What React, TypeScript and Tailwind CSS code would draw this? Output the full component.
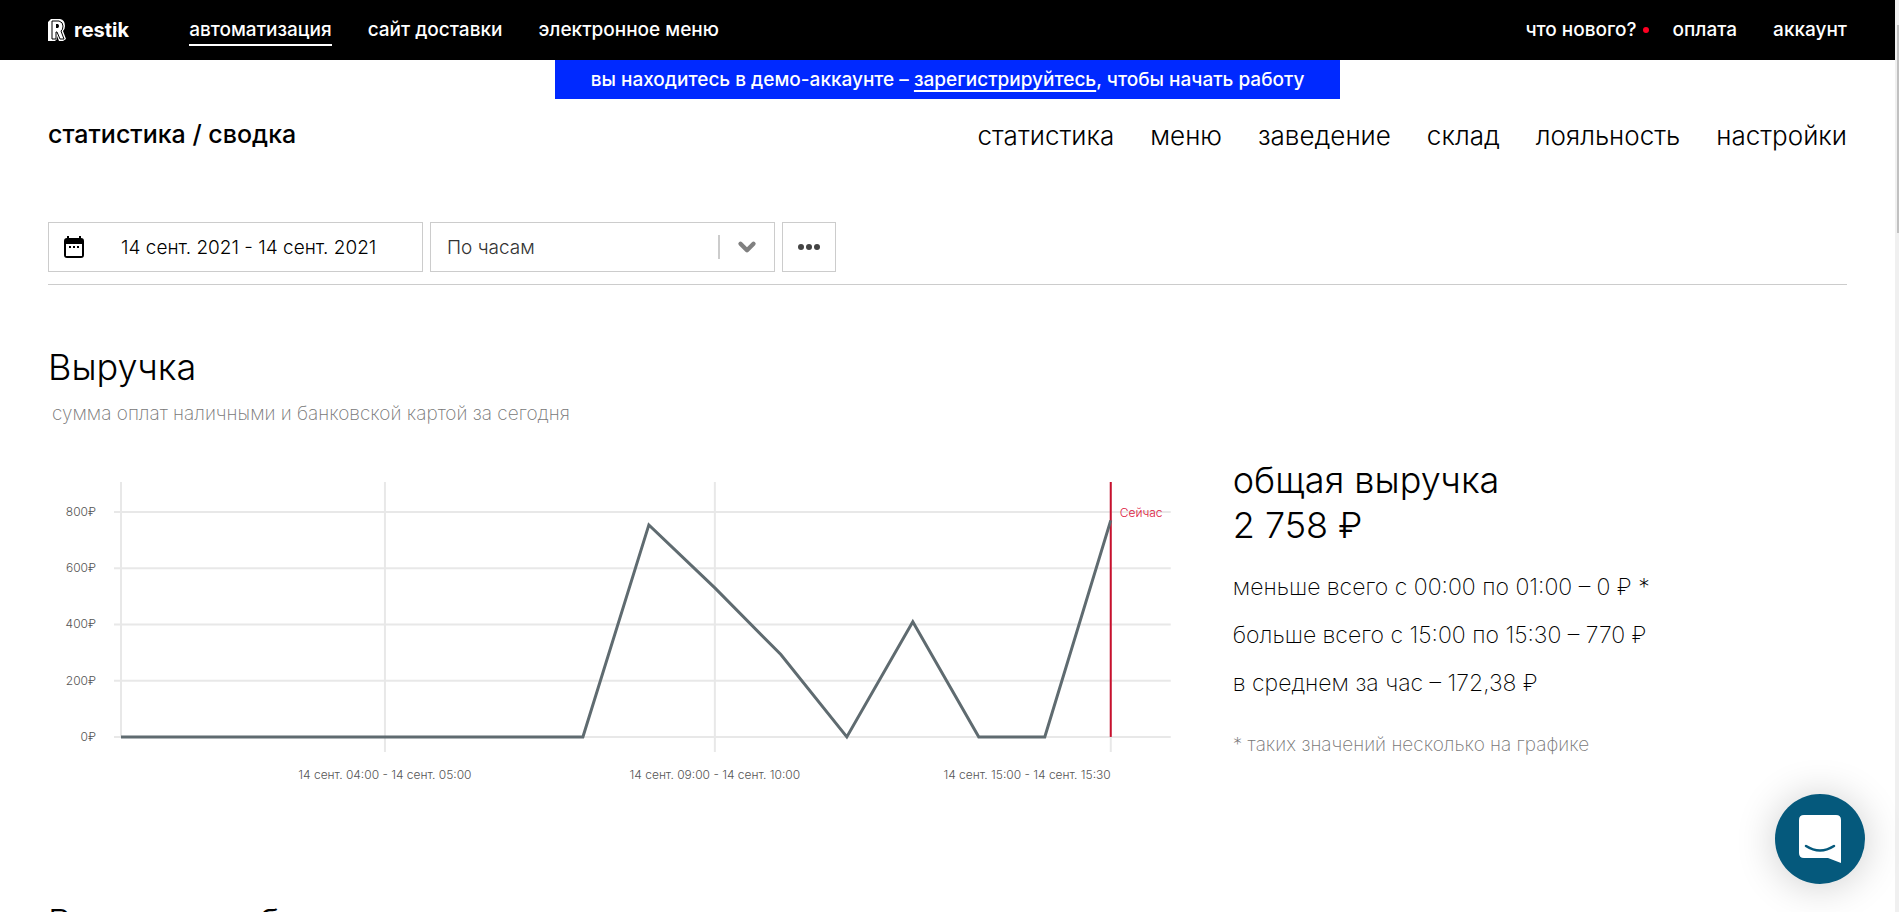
import React from 'react';
import { ChevronDown } from 'lucide-react';

const productLinks = [
  { name: 'автоматизация', href: '#automation', active: true },
  { name: 'сайт доставки', href: '#delivery', active: false },
  { name: 'электронное меню', href: '#emenu', active: false },
];

const sectionLinks = [
  { name: 'статистика', href: '#statistics' },
  { name: 'меню', href: '#menu' },
  { name: 'заведение', href: '#place' },
  { name: 'склад', href: '#stock' },
  { name: 'лояльность', href: '#loyalty' },
  { name: 'настройки', href: '#settings' },
];

const revenue = [0, 0, 0, 0, 0, 0, 0, 0, 754, 530, 293, 0, 410, 0, 0, 770];

const xLabels = [
  { index: 4, text: '14 сент. 04:00 - 14 сент. 05:00', anchor: 'middle' as const },
  { index: 9, text: '14 сент. 09:00 - 14 сент. 10:00', anchor: 'middle' as const },
  { index: 15, text: '14 сент. 15:00 - 14 сент. 15:30', anchor: 'end' as const },
];

const Logo: React.FC = () => (
  <a href="#home" className="flex items-center gap-2 text-white">
    <svg width="18" height="22" viewBox="0 0 18 22" aria-hidden="true">
      <path d="M0 3 3 0H12Q17 1 17 7 17 10 15 12L18 20 15 22H11L9 17V20L7 22H0Z" fill="#fff" />
      <path d="M4 2H11Q15 3 15 7T13 12L16 20H12L9 13H8V20H4Z" fill="#fff" stroke="#000" />
      <path d="M8 5H10Q12 7 10 9H8Z" fill="#000" />
    </svg>
    <span className="text-xl leading-5 font-bold">restik</span>
  </a>
);

const RevenueChart: React.FC = () => {
  const x = (index: number) => 73 + index * 66;
  const y = (value: number) => 261 - (value / 800) * 225;
  const points = revenue.map((value, index) => `${x(index)},${y(value)}`).join(' ');

  return (
    <svg viewBox="0 0 1141 320" className="w-full" role="img" aria-label="Выручка по часам">
      {[0, 200, 400, 600, 800].map((value) => (
        <g key={value}>
          <line x1="66" x2="1123" y1={y(value)} y2={y(value)} stroke="#e8e8e8" strokeWidth="2" />
          <text x="48" y={y(value) + 4} textAnchor="end" fontSize="12" fill="#555">
            {value}₽
          </text>
        </g>
      ))}
      {[0, 4, 9, 15].map((index) => (
        <line key={index} x1={x(index)} x2={x(index)} y1="6" y2={index === 0 ? 261 : 276} stroke="#e8e8e8" strokeWidth="2" />
      ))}
      {xLabels.map((label) => (
        <text key={label.index} x={x(label.index)} y="303" textAnchor={label.anchor} fontSize="12" fill="#555">
          {label.text}
        </text>
      ))}
      <line x1={x(15)} x2={x(15)} y1="6" y2="261" stroke="#c8102e" strokeWidth="2" />
      <text x="1072" y="41" fontSize="12" fill="#dc143c">
        Сейчас
      </text>
      <polyline points={points} fill="none" stroke="#5f6b70" strokeWidth="3" />
    </svg>
  );
};

export default function App() {
  return (
    <div className="flex h-screen overflow-hidden bg-white font-['Inter','Noto_Sans',sans-serif] font-light text-black">
      <div className="min-w-0 flex-1">
        <header className="flex h-15 items-center justify-between bg-black px-12 text-[19px] font-medium text-white">
          <div className="flex items-center">
            <Logo />
            <nav className="ml-15 flex items-center gap-9 pt-0.5">
              {productLinks.map((item) => (
                <a
                  key={item.name}
                  href={item.href}
                  className={item.active ? 'border-b-2 border-white' : 'border-b-2 border-transparent'}
                >
                  {item.name}
                </a>
              ))}
            </nav>
          </div>
          <nav className="flex items-center">
            <a href="#news" className="flex items-center gap-1.5">
              что нового?
              <span className="size-1.5 rounded-full bg-[#ff0022]" />
            </a>
            <a href="#payment" className="ml-6">оплата</a>
            <a href="#account" className="ml-9">аккаунт</a>
          </nav>
        </header>

        <div className="flex justify-center">
          <p className="h-[39px] bg-[#0029ff] px-9 text-[19px] leading-[39px] font-medium text-white">
            вы находитесь в демо-аккаунте –{' '}
            <a href="#signup" className="underline decoration-2 underline-offset-4">зарегистрируйтесь</a>, чтобы начать работу
          </p>
        </div>

        <main className="px-12">
          <div className="flex h-18 items-center justify-between">
            <h1 className="text-[25px] font-medium">статистика / сводка</h1>
            <nav className="flex gap-9 text-[26px]">
              {sectionLinks.map((item) => (
                <a key={item.name} href={item.href}>
                  {item.name}
                </a>
              ))}
            </nav>
          </div>

          <div className="mt-[51px] flex gap-[7px] border-b border-[#ccc] pb-3">
            <button type="button" className="flex h-[50px] w-[375px] items-center border border-[#ccc] pl-3.5 text-[19px]">
              <svg width="22" height="24" viewBox="0 0 22 24" aria-hidden="true">
                <path fillRule="evenodd" d="M4 1H6V3H16V1H18V3Q21 3 21 6V20Q21 23 18 23H4Q1 23 1 20V6Q1 3 4 3ZM3 9V21H19V9Z" />
                <path d="M6 11H8V13H6ZM10 11H12V13H10ZM14 11H16V13H14Z" />
              </svg>
              <span className="ml-9 pt-0.5">14 сент. 2021 - 14 сент. 2021</span>
            </button>
            <div className="relative h-[50px] w-[345px] border border-[#ccc] text-[19px] text-[#333]">
              <select aria-label="Группировка" className="h-full w-full appearance-none bg-transparent pt-0.5 pl-4">
                <option>По часам</option>
              </select>
              <span className="pointer-events-none absolute inset-y-0 right-3.5 flex items-center gap-3.5">
                <span className="h-6 w-0.5 bg-[#ccc]" />
                <ChevronDown size={26} strokeWidth={4} className="text-[#808080]" />
              </span>
            </div>
            <button type="button" aria-label="Ещё" className="flex h-[50px] w-[54px] items-center justify-center gap-0.5 border border-[#ccc]">
              <span className="size-1.5 rounded-full bg-[#444]" />
              <span className="size-1.5 rounded-full bg-[#444]" />
              <span className="size-1.5 rounded-full bg-[#444]" />
            </button>
          </div>

          <section className="pt-[60px]">
            <h2 className="text-4xl leading-[45px]">Выручка</h2>
            <p className="mt-3 ml-1 text-[19px] leading-6 font-extralight text-[#777]">
              сумма оплат наличными и банковской картой за сегодня
            </p>
            <div className="mt-8 grid grid-cols-[65fr_35fr] gap-11">
              <div className="pt-[18px]">
                <RevenueChart />
              </div>
              <div>
                <h3 className="text-4xl leading-[45px]">
                  общая выручка
                  <br />2 758 ₽
                </h3>
                <div className="mt-[15px] text-[23px] leading-12 font-extralight">
                  <p>меньше всего с 00:00 по 01:00 – 0 ₽ *</p>
                  <p>больше всего с 15:00 по 15:30 – 770 ₽</p>
                  <p>в среднем за час – 172,38 ₽</p>
                </div>
                <p className="mt-6 text-[19px] font-extralight text-[#777]">* таких значений несколько на графике</p>
              </div>
            </div>
          </section>

          <section className="pt-[104px]">
            <h2 className="text-4xl leading-[45px]">Выручка по блюдам</h2>
          </section>
        </main>
      </div>

      <div className="w-1 bg-[#f0f0f0] pt-[25px] pl-0.5">
        <div className="h-52 bg-[#c1c1c1]" />
      </div>

      <button
        type="button"
        aria-label="Открыть чат"
        className="fixed right-[34px] bottom-7 flex size-[90px] items-center justify-center rounded-full bg-[#05597c] shadow-[0_2px_40px_rgba(0,0,0,0.2)]"
      >
        <svg width="42" height="48" viewBox="0 0 42 48" aria-hidden="true">
          <path d="M5 0H37Q42 0 42 5V48L29 43H5Q0 43 0 38V5Q0 0 5 0Z" fill="#fff" />
          <path d="M7 31Q21 40 35 31" fill="none" stroke="#05597c" strokeWidth="2.5" strokeLinecap="round" />
        </svg>
      </button>
    </div>
  );
}
